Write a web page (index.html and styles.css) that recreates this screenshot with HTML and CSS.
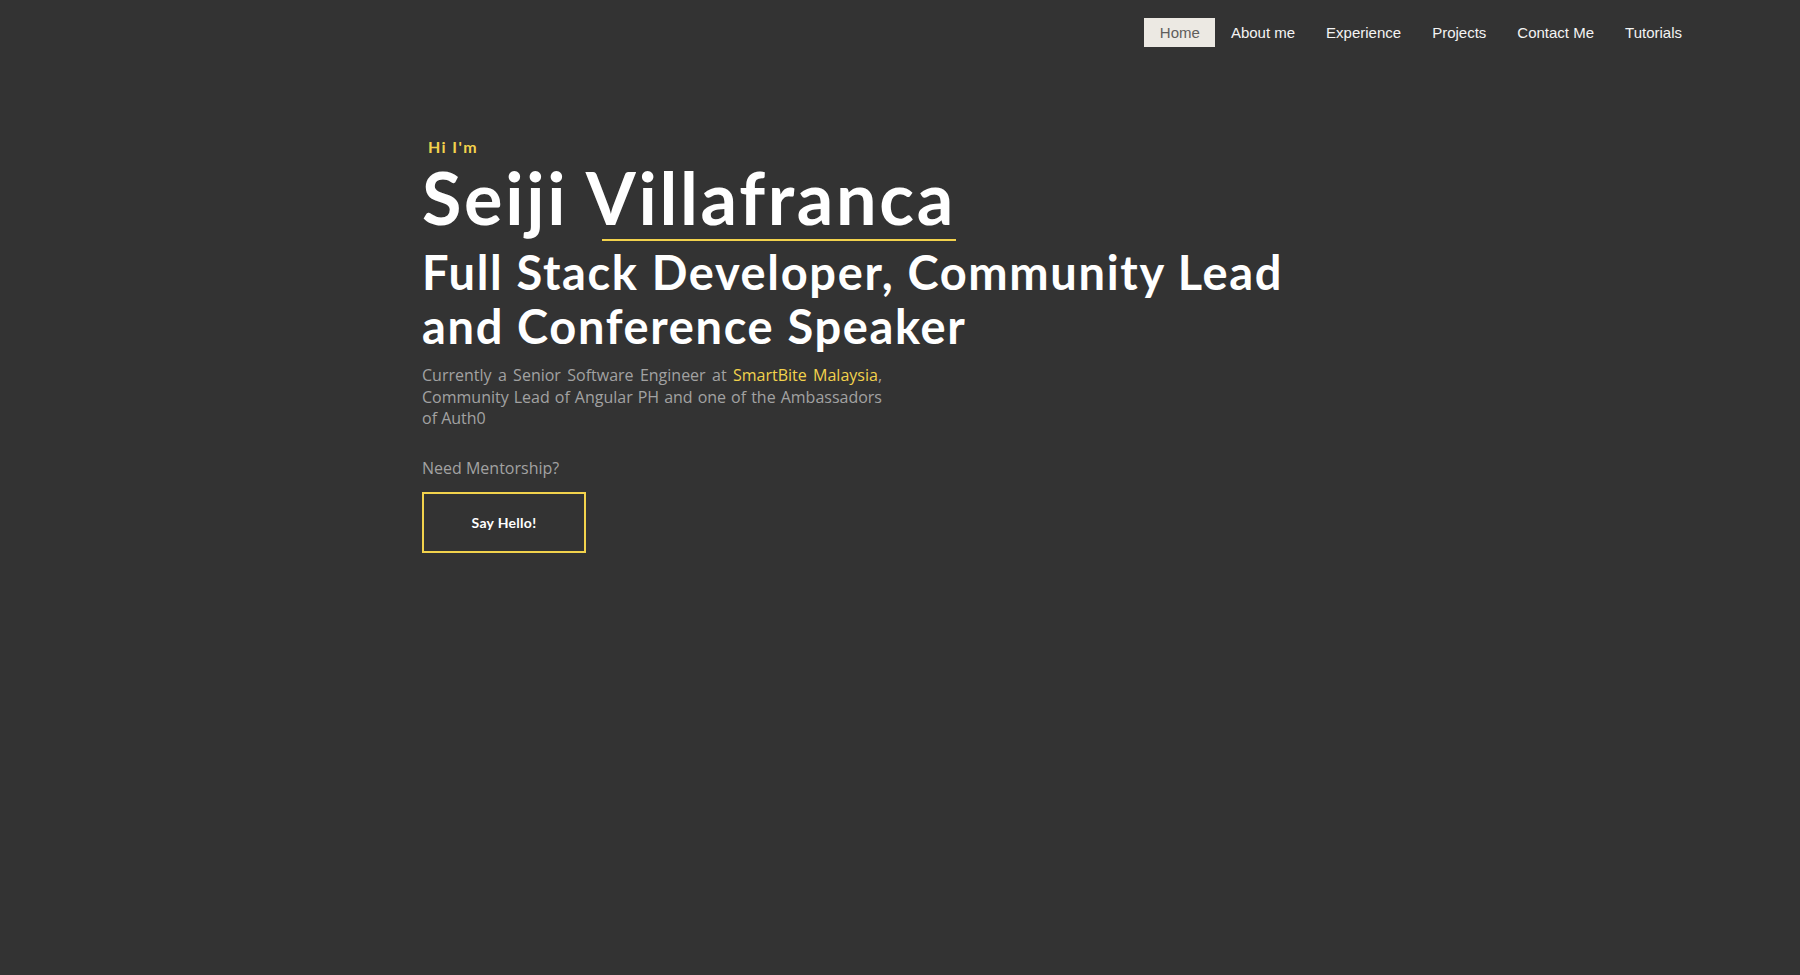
FILE: index.html
```html
<!DOCTYPE html>
<html lang="en">
<head>
<meta charset="utf-8">
<title>Seiji Villafranca</title>
<link rel="stylesheet" href="styles.css">
</head>
<body>
<header class="site-header">
  <nav class="main-nav">
    <a class="nav-item active" href="#">Home</a>
    <a class="nav-item" href="#">About me</a>
    <a class="nav-item" href="#">Experience</a>
    <a class="nav-item" href="#">Projects</a>
    <a class="nav-item" href="#">Contact Me</a>
    <a class="nav-item" href="#">Tutorials</a>
  </nav>
</header>
<main class="hero">
  <p class="greeting">Hi I'm</p>
  <h1 class="name">Seiji Villafranca</h1>
  <div class="name-rule"></div>
  <h2 class="headline">Full Stack Developer, Community Lead<br>and Conference Speaker</h2>
  <p class="intro">Currently a Senior Software Engineer at <span class="accent">SmartBite Malaysia</span>, Community Lead of Angular PH and one of the Ambassadors of Auth0</p>
  <p class="mentor">Need Mentorship?</p>
  <a class="hello-btn" href="#">Say Hello!</a>
</main>
</body>
</html>
```

FILE: styles.css
```css
html, body {
  margin: 0;
  padding: 0;
}

body {
  background: #333333;
  min-height: 975px;
  color: #ffffff;
  font-family: "Lato", "Open Sans", sans-serif;
}

.site-header {
  display: flex;
  justify-content: flex-end;
  padding: 18px 102.5px 0 0;
}

.main-nav {
  display: flex;
}

.nav-item {
  display: block;
  font-family: "Liberation Sans", Arial, sans-serif;
  font-size: 15px;
  line-height: 29px;
  padding: 0 15.5px;
  color: #f4f4f4;
  text-decoration: none;
}

.nav-item.active {
  background: #ece9e3;
  color: #5f5d5b;
}

.hero {
  display: flex;
  flex-direction: column;
  align-items: flex-start;
  margin-left: 422px;
  padding-top: 90px;
}

.greeting {
  margin: 0;
  padding-left: 6px;
  font-family: "Lato", sans-serif;
  font-weight: 700;
  font-size: 16px;
  line-height: 20px;
  letter-spacing: 1.4px;
  color: #f2d24c;
}

.name {
  margin: 0;
  font-family: "Lato", sans-serif;
  font-weight: 700;
  font-size: 72px;
  line-height: 80px;
  letter-spacing: 2.7px;
  color: #ffffff;
}

.name-rule {
  width: 354px;
  height: 2px;
  margin: 2px 0 0 180px;
  background: #f2d24c;
}

.headline {
  margin: 4px 0 0;
  font-family: "Lato", sans-serif;
  font-weight: 700;
  font-size: 47px;
  line-height: 54px;
  letter-spacing: 1.65px;
  color: #ffffff;
}

.intro {
  width: 460px;
  margin: 12px 0 0;
  font-family: "Open Sans", sans-serif;
  font-size: 16px;
  line-height: 21.7px;
  text-align: justify;
  color: #a2a2a2;
}

.accent {
  color: #f2d24c;
}

.mentor {
  margin: 28px 0 0;
  font-family: "Open Sans", sans-serif;
  font-size: 16px;
  line-height: 21.7px;
  color: #a2a2a2;
}

.hello-btn {
  display: flex;
  align-items: center;
  justify-content: center;
  box-sizing: border-box;
  width: 164px;
  height: 61px;
  margin-top: 12px;
  border: 2px solid #f2d24c;
  font-family: "Lato", sans-serif;
  font-weight: 700;
  font-size: 14px;
  letter-spacing: 0.3px;
  color: #ffffff;
  text-decoration: none;
}
```
